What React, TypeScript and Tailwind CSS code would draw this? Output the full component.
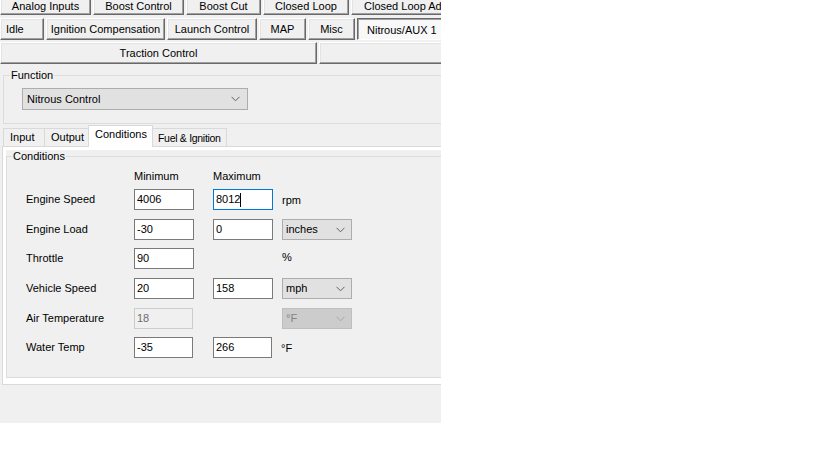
import React from 'react';

const raised =
  'h-[22px] shrink-0 flex items-center justify-center bg-[#f0f0f0] border border-t-white border-l-white border-r-[#696969] border-b-[#696969] shadow-[inset_-1px_-1px_0_#a0a0a0,inset_1px_1px_0_#e3e3e3] whitespace-nowrap';
const pressed =
  'h-[22px] shrink-0 flex items-center justify-center bg-[#f8f8f8] border border-t-[#696969] border-l-[#696969] border-r-white border-b-white shadow-[inset_1px_1px_0_#a0a0a0] whitespace-nowrap';

function Chevron({ color = '#606060' }: { color?: string }) {
  return (
    <svg width="9" height="6" viewBox="0 0 9 6" className="shrink-0">
      <path d="M0.5 0.8 L4.5 4.8 L8.5 0.8" fill="none" stroke={color} strokeWidth="1" />
    </svg>
  );
}

function Combo({ value, width, disabled }: { value: string; width: string; disabled?: boolean }) {
  return (
    <div
      className={`${width} h-[21px] flex items-center justify-between pl-[3px] pr-[6px] border ${
        disabled ? 'bg-[#cccccc] border-[#bfbfbf] text-[#838383]' : 'bg-[#e1e1e1] border-[#adadad] text-black'
      }`}
    >
      <span>{value}</span>
      <Chevron color={disabled ? '#a6a6a6' : '#606060'} />
    </div>
  );
}

function TextBox({ value, width, focused, disabled }: { value: string; width: string; focused?: boolean; disabled?: boolean }) {
  return (
    <div
      className={`${width} h-[21px] shrink-0 flex items-center pl-[2px] border ${
        disabled
          ? 'bg-[#f0f0f0] border-[#cccccc] text-[#6d6d6d]'
          : focused
          ? 'bg-white border-[#0078d7] text-black'
          : 'bg-white border-[#7a7a7a] text-black'
      }`}
    >
      <span>{value}</span>
      {focused && <span className="w-px h-[14px] bg-black" />}
    </div>
  );
}

type Row = {
  label: string;
  min: string;
  max?: string;
  unit?: string;
  combo?: string;
  mt: string;
  minW: string;
  maxW: string;
  gap: string;
  disabled?: boolean;
  focusMax?: boolean;
};

const rows: Row[] = [
  { label: 'Engine Speed', min: '4006', max: '8012', unit: 'rpm', mt: 'mt-0', minW: 'w-[60px]', maxW: 'w-[60px]', gap: 'w-[19px]', focusMax: true },
  { label: 'Engine Load', min: '-30', max: '0', combo: 'inches', mt: 'mt-[9px]', minW: 'w-[60px]', maxW: 'w-[60px]', gap: 'w-[19px]' },
  { label: 'Throttle', min: '90', unit: '%', mt: 'mt-[8px]', minW: 'w-[60px]', maxW: 'w-[60px]', gap: 'w-[19px]' },
  { label: 'Vehicle Speed', min: '20', max: '158', combo: 'mph', mt: 'mt-[9px]', minW: 'w-[60px]', maxW: 'w-[60px]', gap: 'w-[19px]' },
  { label: 'Air Temperature', min: '18', combo: '°F', mt: 'mt-[9px]', minW: 'w-[59px]', maxW: 'w-[60px]', gap: 'w-[20px]', disabled: true },
  { label: 'Water Temp', min: '-35', max: '266', unit: '°F', mt: 'mt-[8px]', minW: 'w-[59px]', maxW: 'w-[59px]', gap: 'w-[20px]' },
];

export default function App() {
  return (
    <div className="w-[816px] h-[460px] bg-white font-['Liberation_Sans',Arial,sans-serif] text-[11px] leading-[13px] text-black">
      <div className="w-[441px] h-[423px] bg-[#f0f0f0] overflow-hidden flex flex-col">
        {/* button tabs */}
        <div className="flex gap-[2px] -mt-[7px]">
          <div className={`${raised} w-[91px] !items-start pt-[6px]`}>Analog Inputs</div>
          <div className={`${raised} w-[91px] !items-start pt-[6px]`}>Boost Control</div>
          <div className={`${raised} w-[75px] !items-start pt-[6px]`}>Boost Cut</div>
          <div className={`${raised} w-[86px] !items-start pt-[6px]`}>Closed Loop</div>
          <div className={`${raised} w-[110px] !items-start !justify-start pt-[6px] pl-[12px]`}>Closed Loop Advanced</div>
        </div>
        <div className="flex gap-[2px] mt-[3px]">
          <div className={`${raised} w-[44px] !justify-start pl-[5px]`}>Idle</div>
          <div className={`${raised} w-[119px]`}>Ignition Compensation</div>
          <div className={`${raised} w-[90px]`}>Launch Control</div>
          <div className={`${raised} w-[47px]`}>MAP</div>
          <div className={`${raised} w-[47px]`}>Misc</div>
          <div className={`${pressed} w-[100px] !justify-start pl-[9px] pt-[2px]`}>Nitrous/AUX 1</div>
        </div>
        <div className="flex gap-[2px] mt-[2px]">
          <div className={`${raised} w-[317px]`}>Traction Control</div>
          <div className={`${raised} w-[140px]`} />
        </div>

        {/* Function group */}
        <fieldset className="mt-[5px] ml-[3px] -mr-[20px] border border-[#dcdcdc] pb-[13px]">
          <legend className="ml-[6px] px-px">Function</legend>
          <div className="mt-[6px] ml-[18px] w-[226px] h-[22px] flex items-center justify-between pl-[4px] pr-[7px] bg-[#e1e1e1] border border-[#adadad]">
            <span>Nitrous Control</span>
            <Chevron />
          </div>
        </fieldset>

        {/* inner tabs */}
        <div className="mt-px ml-[3px] h-[21px] flex items-end whitespace-nowrap">
          <div className="w-[42px] h-[18px] pl-[6px] flex items-center bg-[#f0f0f0] border border-b-0 border-[#d9d9d9]">Input</div>
          <div className="-ml-px w-[45px] h-[18px] pl-[6px] flex items-center bg-[#f0f0f0] border border-b-0 border-[#d9d9d9]">Output</div>
          <div className="relative z-10 -ml-px w-[65px] h-[22px] -mb-px pl-[6px] pb-[4px] flex items-center bg-white border border-b-0 border-[#d9d9d9]">Conditions</div>
          <div className="-ml-px w-[75px] h-[18px] pl-[5px] pt-[1px] flex items-center bg-[#f0f0f0] border border-b-0 border-[#d9d9d9] text-[10.5px] tracking-[-0.3px]">Fuel &amp; Ignition</div>
        </div>

        {/* tab page */}
        <div className="relative ml-[2px] -mr-[20px] h-[239px] bg-white border border-[#d9d9d9] pl-[3px] pt-[3px] pb-[6px]">
          <div className="h-full bg-[#f0f0f0]">
            <fieldset className="h-full border border-[#dcdcdc]">
              <legend className="ml-[5px] px-px">Conditions</legend>
              <div className="pl-[19px]">
                <div className="mt-[7px] flex">
                  <span className="ml-[108px] w-[79px]">Minimum</span>
                  <span>Maximum</span>
                </div>
                <div className="mt-[6px] flex flex-col">
                  {rows.map((r) => (
                    <div key={r.label} className={`${r.mt} h-[21px] flex items-center`}>
                      <span className="w-[108px] shrink-0">{r.label}</span>
                      <TextBox value={r.min} width={r.minW} disabled={r.disabled} />
                      <div className={`${r.gap} shrink-0`} />
                      {r.max !== undefined ? (
                        <TextBox value={r.max} width={r.maxW} focused={r.focusMax} />
                      ) : (
                        <div className={`${r.maxW} shrink-0`} />
                      )}
                      <div className="w-[9px] shrink-0" />
                      {r.combo ? (
                        <Combo value={r.combo} width="w-[70px]" disabled={r.disabled} />
                      ) : (
                        <span className={r.unit === '%' ? '-mt-[2px]' : 'mt-[2px]'}>{r.unit}</span>
                      )}
                    </div>
                  ))}
                </div>
              </div>
            </fieldset>
          </div>
        </div>
      </div>
    </div>
  );
}
